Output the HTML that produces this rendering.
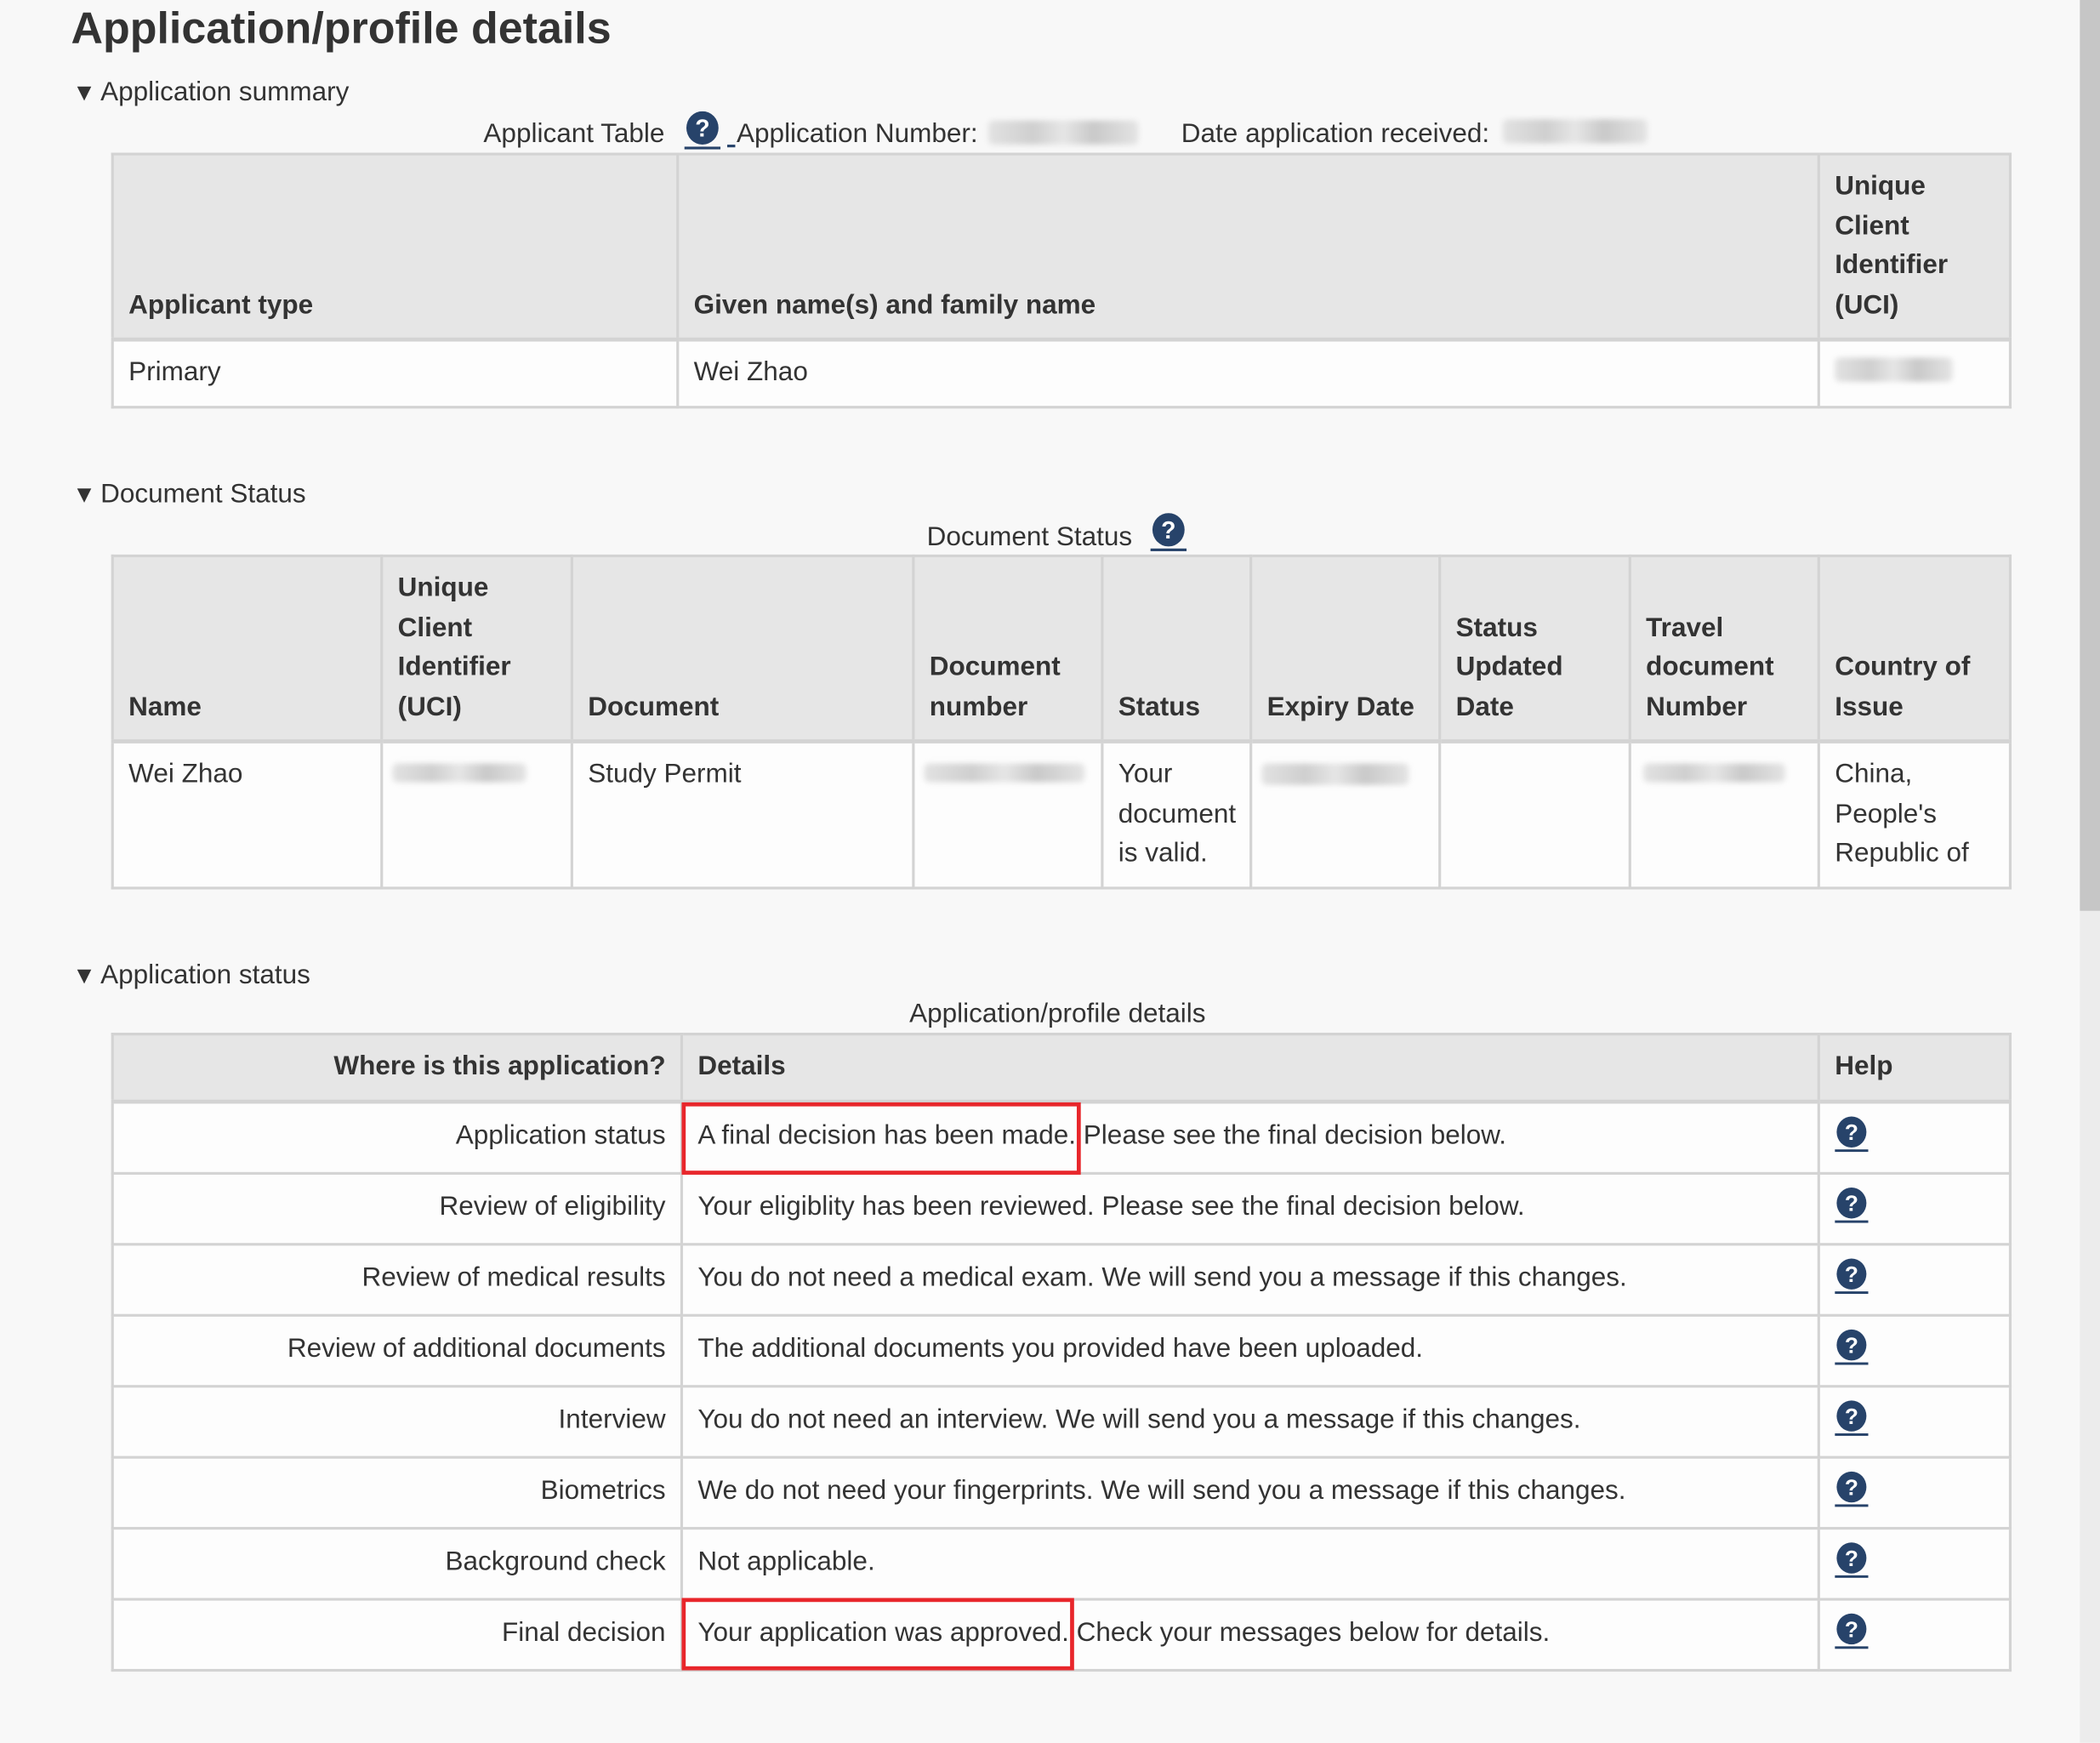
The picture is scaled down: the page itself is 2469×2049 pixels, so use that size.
<!DOCTYPE html>
<html><head><meta charset="utf-8">
<style>
html,body{margin:0;padding:0;background:#f8f8f8;width:2469px;height:2049px;overflow:hidden;}
#w{position:absolute;left:0;top:0;width:1568px;height:1301px;transform:scale(1.5746);transform-origin:0 0;font-family:"Liberation Sans",Arial,sans-serif;color:#333;font-size:20px;}
.a{position:absolute;white-space:nowrap;}
.tri{position:absolute;font-size:18px;line-height:26px;left:54px;}
h1{position:absolute;left:53px;top:0;margin:0;font-size:33px;font-weight:bold;line-height:42px;color:#333;}
table{position:absolute;left:83px;width:1417px;border-collapse:collapse;table-layout:fixed;}
th,td{border:2px solid #d3d3d3;padding:9px 11px;line-height:29.5px;text-align:left;}
th{background:#e6e6e6;vertical-align:bottom;font-weight:bold;padding-top:9px;padding-bottom:9px;}
td{background:#fdfdfd;vertical-align:top;font-weight:normal;}
tr.hb th{border-bottom-width:3px;}
.t3 td{vertical-align:middle;padding-top:0;padding-bottom:0;height:51px;}
.t3 td.r{text-align:right;}
.blur{position:absolute;height:18px;background:linear-gradient(90deg,#e2e2e2,#cfcfcf 30%,#e6e6e6 50%,#c9c9c9 70%,#e4e4e4);filter:blur(2px);border-radius:4px;}
.red{position:absolute;border:3px solid #e8262b;box-sizing:border-box;}
.q{display:inline-block;width:25px;height:28px;vertical-align:middle;}
</style></head><body><div id="w">
<h1>Application/profile details</h1>
<div class="tri" style="top:56px">▼</div><div class="a" style="left:75px;top:56px;line-height:26px">Application summary</div>
<div class="a" style="left:361px;top:87px;line-height:26px">Applicant Table</div>
<svg class="a" style="left:511px;top:83px" width="27" height="29" viewBox="0 0 27 29"><ellipse cx="13.5" cy="12.5" rx="12" ry="12.5" fill="#27436a"/><text x="13.5" y="19" text-anchor="middle" font-family="Liberation Sans" font-weight="bold" font-size="18" fill="#fff">?</text><rect x="0" y="26.5" width="27" height="2" fill="#27436a"/></svg>
<div class="a" style="left:543px;top:108px;width:6px;height:2px;background:#27436a"></div>
<div class="a" style="left:550px;top:87px;line-height:26px">Application Number:</div>
<div class="blur" style="left:738px;top:90px;width:112px"></div>
<div class="a" style="left:882px;top:87px;line-height:26px">Date application received:</div>
<div class="blur" style="left:1122px;top:89px;width:108px"></div>

<table style="top:114px">
<colgroup><col style="width:422px"><col style="width:852px"><col style="width:143px"></colgroup>
<tr class="hb"><th>Applicant type</th><th>Given name(s) and family name</th><th>Unique Client Identifier (UCI)</th></tr>
<tr><td>Primary</td><td>Wei Zhao</td><td><div class="blur" style="position:relative;width:88px;top:3px"></div></td></tr>
</table>

<div class="tri" style="top:356px">▼</div><div class="a" style="left:75px;top:356px;line-height:26px">Document Status</div>
<div class="a" style="left:692px;top:388px;line-height:26px">Document Status</div>
<svg class="a" style="left:859px;top:383px" width="27" height="29" viewBox="0 0 27 29"><ellipse cx="13.5" cy="12.5" rx="12" ry="12.5" fill="#27436a"/><text x="13.5" y="19" text-anchor="middle" font-family="Liberation Sans" font-weight="bold" font-size="18" fill="#fff">?</text><rect x="0" y="26.5" width="27" height="2" fill="#27436a"/></svg>

<table style="top:414px">
<colgroup><col style="width:201px"><col style="width:142px"><col style="width:255px"><col style="width:141px"><col style="width:111px"><col style="width:141px"><col style="width:142px"><col style="width:141px"><col style="width:143px"></colgroup>
<tr class="hb"><th>Name</th><th>Unique Client Identifier (UCI)</th><th>Document</th><th>Document number</th><th>Status</th><th>Expiry Date</th><th>Status Updated Date</th><th>Travel document Number</th><th>Country of Issue</th></tr>
<tr><td>Wei Zhao</td><td><div class="blur" style="position:relative;width:100px;left:-4px;top:6px;height:14px"></div></td><td>Study Permit</td><td><div class="blur" style="position:relative;width:120px;left:-4px;top:6px;height:14px"></div></td><td>Your document is valid.</td><td><div class="blur" style="position:relative;width:110px;left:-4px;top:6px;height:16px"></div></td><td></td><td><div class="blur" style="position:relative;width:106px;left:-2px;top:6px;height:14px"></div></td><td>China, People's Republic of</td></tr>
</table>

<div class="tri" style="top:715px">▼</div><div class="a" style="left:75px;top:715px;line-height:26px">Application status</div>
<div class="a" style="left:679px;top:744px;line-height:26px">Application/profile details</div>

<table class="t3" style="top:771px">
<colgroup><col style="width:425px"><col style="width:849px"><col style="width:143px"></colgroup>
<tr class="hb"><th style="text-align:right;vertical-align:middle;padding-top:9px;padding-bottom:9px">Where is this application?</th><th style="vertical-align:middle;padding-top:9px;padding-bottom:9px">Details</th><th style="vertical-align:middle;padding-top:9px;padding-bottom:9px">Help</th></tr>
<tr><td class="r">Application status</td><td>A final decision has been made. Please see the final decision below.</td><td>QQ</td></tr>
<tr><td class="r">Review of eligibility</td><td>Your eligiblity has been reviewed. Please see the final decision below.</td><td>QQ</td></tr>
<tr><td class="r">Review of medical results</td><td>You do not need a medical exam. We will send you a message if this changes.</td><td>QQ</td></tr>
<tr><td class="r">Review of additional documents</td><td>The additional documents you provided have been uploaded.</td><td>QQ</td></tr>
<tr><td class="r">Interview</td><td>You do not need an interview. We will send you a message if this changes.</td><td>QQ</td></tr>
<tr><td class="r">Biometrics</td><td>We do not need your fingerprints. We will send you a message if this changes.</td><td>QQ</td></tr>
<tr><td class="r">Background check</td><td>Not applicable.</td><td>QQ</td></tr>
<tr><td class="r">Final decision</td><td>Your application was approved. Check your messages below for details.</td><td>QQ</td></tr>
</table>
<div class="red" style="left:509px;top:823px;width:298px;height:54px"></div>
<div class="red" style="left:509px;top:1193px;width:293px;height:54px"></div>

<div class="a" style="left:1553px;top:0;width:15px;height:1301px;background:#ececec"></div>
<div class="a" style="left:1553px;top:0;width:15px;height:680px;background:#c6c6c6"></div>
</div>
<script>
document.querySelectorAll('.t3 td').forEach(function(td){if(td.textContent==='QQ'){td.innerHTML='<svg class="q" viewBox="0 0 27 29" width="25" height="28" style="position:relative;top:-2px;left:0"><ellipse cx="13.5" cy="12.5" rx="12" ry="12.5" fill="#27436a"/><text x="13.5" y="19" text-anchor="middle" font-family="Liberation Sans" font-weight="bold" font-size="18" fill="#fff">?</text><rect x="0" y="26.5" width="27" height="2" fill="#27436a"/></svg>';}});
</script>
</body></html>
